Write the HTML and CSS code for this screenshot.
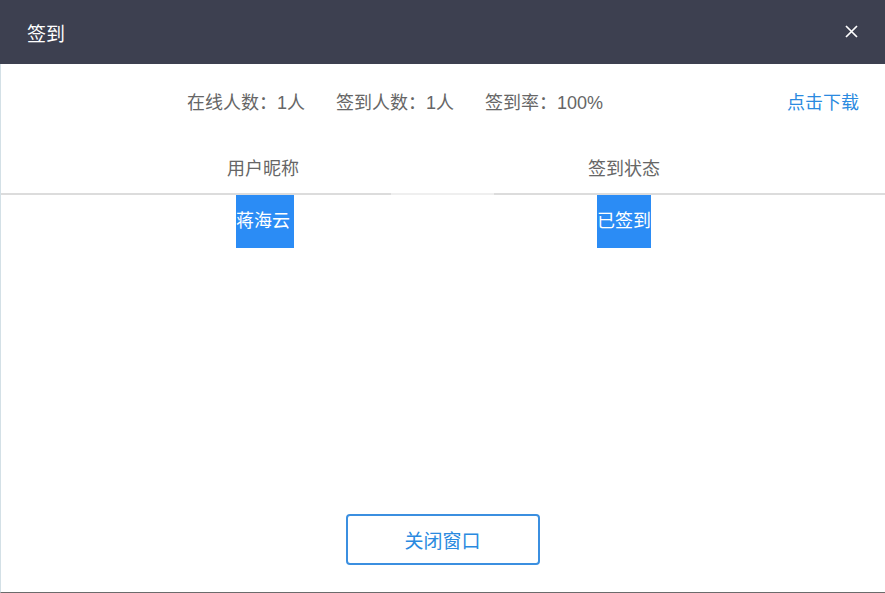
FILE: index.html
```html
<html>
<head>
    <title>签到</title>
    <link rel="stylesheet" href="styles.css">
</head>
<body>
    <div class="dialog">
        <div class="dialog-header">
            <span class="dialog-title">签到</span>
            <svg class="dialog-close" width="13" height="13" viewBox="0 0 13 13">
                <path d="M1 1L12 12M12 1L1 12" stroke="#fff" stroke-width="1.7" fill="none"/>
            </svg>
        </div>
        <div class="stats">
            <span>在线人数：1人</span>
            <span>签到人数：1人</span>
            <span>签到率：100%</span>
            <a class="download">点击下载</a>
        </div>
        <div class="sign-table">
            <div class="row head">
                <div class="cell">用户昵称</div>
                <div class="cell">签到状态</div>
                <div class="cell"></div>
            </div>
            <div class="row">
                <div class="cell"><span class="tag tag-name">蒋海云</span></div>
                <div class="cell"><span class="tag">已签到</span></div>
                <div class="cell"></div>
            </div>
        </div>
        <div class="dialog-footer">
            <button class="close-btn">关闭窗口</button>
        </div>
    </div>
</body>
</html>
```

FILE: styles.css
```css
body {
    margin: 0;
    font-family: "Liberation Sans", "Noto Sans CJK SC", sans-serif;
    background: #fff;
}
.dialog {
    width: 885px;
    height: 593px;
    box-sizing: border-box;
    border-left: 1px solid #d3e0e6;
    border-bottom: 1px solid #6b6b6b;
    display: flex;
    flex-direction: column;
}
.dialog-header {
    height: 64px;
    flex-shrink: 0;
    margin-left: -1px;
    background: #3d4050;
    display: flex;
    align-items: center;
    justify-content: space-between;
    padding: 0 27px 0 27px;
}
.dialog-title {
    color: #fff;
    font-size: 19px;
}
.dialog-close {
    display: block;
    margin-top: -1px;
}
.stats {
    height: 74px;
    display: flex;
    align-items: center;
    gap: 31px;
    padding: 0 26px 0 186px;
    font-size: 18px;
    color: #666;
}
.download {
    margin-left: auto;
    color: #2a8ae0;
    font-size: 18px;
}
.row {
    display: grid;
    grid-template-columns: 524px 198px 1fr;
}
.row.head {
    height: 57px;
    align-items: center;
    background: linear-gradient(to right, #dcdcdc 390px, #efefef 390px, #efefef 493px, #dcdcdc 493px) bottom / 100% 2px no-repeat;
}
.head .cell {
    font-size: 18px;
    color: #666;
    text-align: center;
}
.row .cell {
    text-align: center;
}
.tag {
    display: inline-block;
    height: 53px;
    line-height: 53px;
    background: #2b8cf5;
    color: #fff;
    font-size: 18px;
}
.tag-name {
    width: 58px;
    margin-left: 4px;
    text-align: left;
}
.dialog-footer {
    margin-top: auto;
    padding-bottom: 27px;
    display: flex;
    justify-content: center;
}
.close-btn {
    width: 194px;
    height: 51px;
    margin-left: -1px;
    background: #fff;
    border: 2px solid #3b8fe0;
    border-radius: 4px;
    color: #2a8ae0;
    font-size: 19px;
    font-family: "Liberation Sans", "Noto Sans CJK SC", sans-serif;
}
```
